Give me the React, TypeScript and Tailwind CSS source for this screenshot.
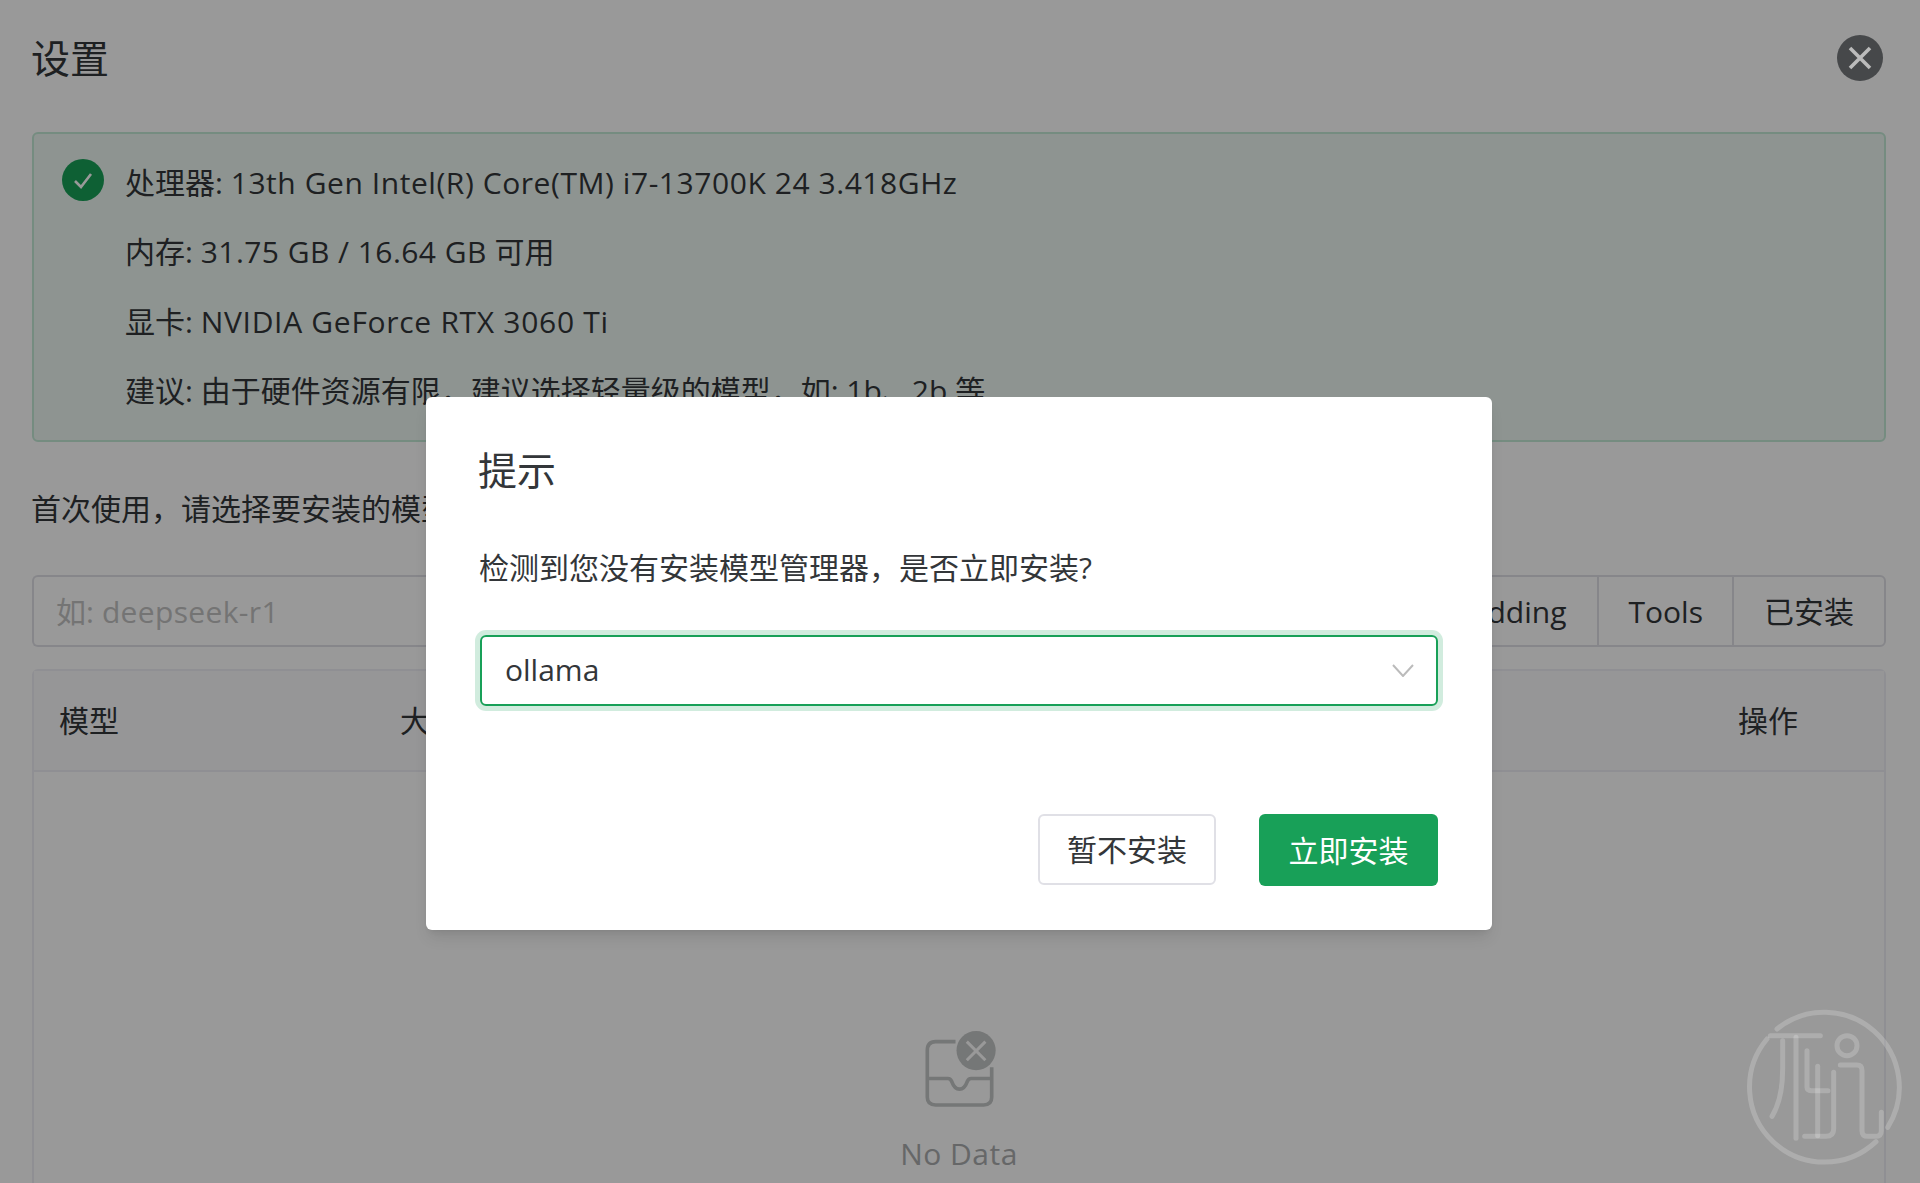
const font = { fontFamily: '"Open Sans","Noto Sans CJK SC",sans-serif' };

function CheckBadge() {
  return (
    <svg viewBox="0 0 42 42" className="w-[42px] h-[42px] shrink-0 mt-[11px]">
      <circle cx="21" cy="21" r="21" fill="#18a058" />
      <path d="M13 22 L19 28 L29 15" fill="none" stroke="#fff" strokeWidth="2.6" />
    </svg>
  );
}

function EmptyIcon() {
  return (
    <svg viewBox="190 60 220 235" className="w-[73px] h-[78px] ml-[3px]">
      <path
        d="M285 95 H225 Q200 95 200 122 V263 Q200 286 225 286 H370 Q394 286 394 263 V172"
        fill="none"
        stroke="#c4c6c6"
        strokeWidth="11"
      />
      <path
        d="M200 206 H262 Q270 206 274 216 Q282 238 297 238 Q312 238 320 216 Q324 206 332 206 H394"
        fill="none"
        stroke="#c4c6c6"
        strokeWidth="11"
      />
      <circle cx="347" cy="122" r="59" fill="#c4c6c6" />
      <path d="M319 95 L375 151 M375 95 L319 151" stroke="#fff" strokeWidth="9" />
    </svg>
  );
}

function Watermark() {
  return (
    <svg
      viewBox="0 0 600 579"
      className="absolute -right-[2px] bottom-[1px] w-[200px] h-[193px] z-30 pointer-events-none"
      fill="none"
      stroke="#ffffff"
      strokeOpacity="0.2"
      strokeWidth="15"
      strokeLinecap="round"
    >
      <path d="M165 120 A225 225 0 0 1 497 415" />
      <path d="M462 458 A225 225 0 0 1 135 150" />
      <path d="M145 140 H295" />
      <path d="M222 145 V448" />
      <path d="M182 155 V240 Q182 330 150 382" />
      <path d="M255 185 V295 Q255 305 268 305 H318" />
      <path d="M287 232 V440" />
      <path d="M335 250 V420 Q335 442 312 442 H248" />
      <circle cx="375" cy="170" r="30" />
      <path d="M355 228 H405 Q420 228 420 245 V425 Q420 442 437 442 H460 Q478 442 478 425 V370" />
    </svg>
  );
}

export default function App() {
  return (
    <div className="relative h-screen overflow-hidden bg-white text-[30px] text-[#333639]" style={font}>
      <div className="pl-8 pt-[35px] pr-[34px]">
        <div className="flex items-center justify-between h-[46px]">
          <h1 className="text-[39px] leading-[46px] font-normal -ml-[1px]">设置</h1>
          <button className="relative z-20 flex items-center justify-center w-[46px] h-[46px] mr-[3px] rounded-full bg-[#46484a]">
            <svg viewBox="0 0 24 24" className="w-[24px] h-[24px]">
              <path d="M2 2 L22 22 M22 2 L2 22" stroke="#bbbbbb" strokeWidth="3.6" />
            </svg>
          </button>
        </div>

        <div className="flex mt-[51px] h-[310px] overflow-hidden rounded-[6px] border-2 border-[#c3e9d6] bg-[#edf7f2] px-[28px] pt-[14px]">
          <CheckBadge />
          <div className="ml-[21px] leading-[69.4px]">
            <p>
              处理器: <span className="tracking-[0.56px]">13th Gen Intel(R) Core(TM) i7-13700K 24 3.418GHz</span>
            </p>
            <p>
              内存: <span className="tracking-[0.45px]">31.75 GB / 16.64 GB</span> 可用
            </p>
            <p>
              显卡: <span className="tracking-[0.7px]">NVIDIA GeForce RTX 3060 Ti</span>
            </p>
            <p>建议: 由于硬件资源有限，建议选择轻量级的模型，如: 1b、2b 等</p>
          </div>
        </div>

        <p className="mt-[47px] leading-[40px] -ml-[1px]">首次使用，请选择要安装的模型</p>

        <div className="flex mt-[46px] h-[72px]">
          <div className="flex-1 flex items-center rounded-l-[6px] border-2 border-r-0 border-[#e0e0e6] px-[22px] text-[#c2c2c2]">
            如: <span className="tracking-[0.35px] ml-[8px]">deepseek-r1</span>
          </div>
          <div className="flex rounded-r-[6px] border-2 border-[#e0e0e6]">
            <div className="flex items-center px-[30px] border-l-2 border-[#e0e0e6]">Embedding</div>
            <div className="flex items-center pl-[30px] pr-[29px] border-l-2 border-[#e0e0e6]">Tools</div>
            <div className="flex items-center px-[30px] border-l-2 border-[#e0e0e6]">已安装</div>
          </div>
        </div>

        <div className="mt-[22px] h-[700px] rounded-t-[6px] border-2 border-[#efeff5]">
          <div className="flex items-center h-[101px] pl-[25px] pr-[86px] bg-[#fafafc] border-b-2 border-[#efeff5]">
            <span className="w-[341px]">模型</span>
            <span>大小</span>
            <span className="ml-auto">操作</span>
          </div>
          <div className="flex flex-col items-center pt-[258px] text-[#aaacad]">
            <EmptyIcon />
            <span className="mt-[26px] leading-[40px] tracking-[0.5px]">No Data</span>
          </div>
        </div>
      </div>

      <div className="absolute inset-0 z-10 flex justify-center pt-[397px] bg-black/40">
        <div className="w-[1066px] h-[533px] mr-[2px] rounded-[6px] bg-white pl-[53px] pr-[54px] pt-[49px] shadow-lg">
          <h2 className="text-[39px] leading-[48px] font-normal -ml-[1px]">提示</h2>
          <p className="mt-[54px] leading-[40px]">检测到您没有安装模型管理器，是否立即安装?</p>
          <div className="flex items-center justify-between h-[71px] mt-[47px] ml-[1px] pl-[23px] pr-[22px] rounded-[6px] border-2 border-[#18a058] shadow-[0_0_0_5px_rgba(24,160,88,0.2)]">
            <span className="pb-[2px]">ollama</span>
            <svg viewBox="0 0 22 13" className="w-[22px] h-[13px]">
              <path d="M1 1 L11 12 L21 1" fill="none" stroke="#bbbbbb" strokeWidth="2" />
            </svg>
          </div>
          <div className="flex justify-end gap-[43px] mt-[108px] ml-[1px]">
            <button className="w-[178px] h-[71px] rounded-[6px] border-2 border-[#e0e0e6]">暂不安装</button>
            <button className="w-[179px] h-[72px] rounded-[6px] bg-[#18a058] text-white">立即安装</button>
          </div>
        </div>
      </div>

      <Watermark />
    </div>
  );
}
